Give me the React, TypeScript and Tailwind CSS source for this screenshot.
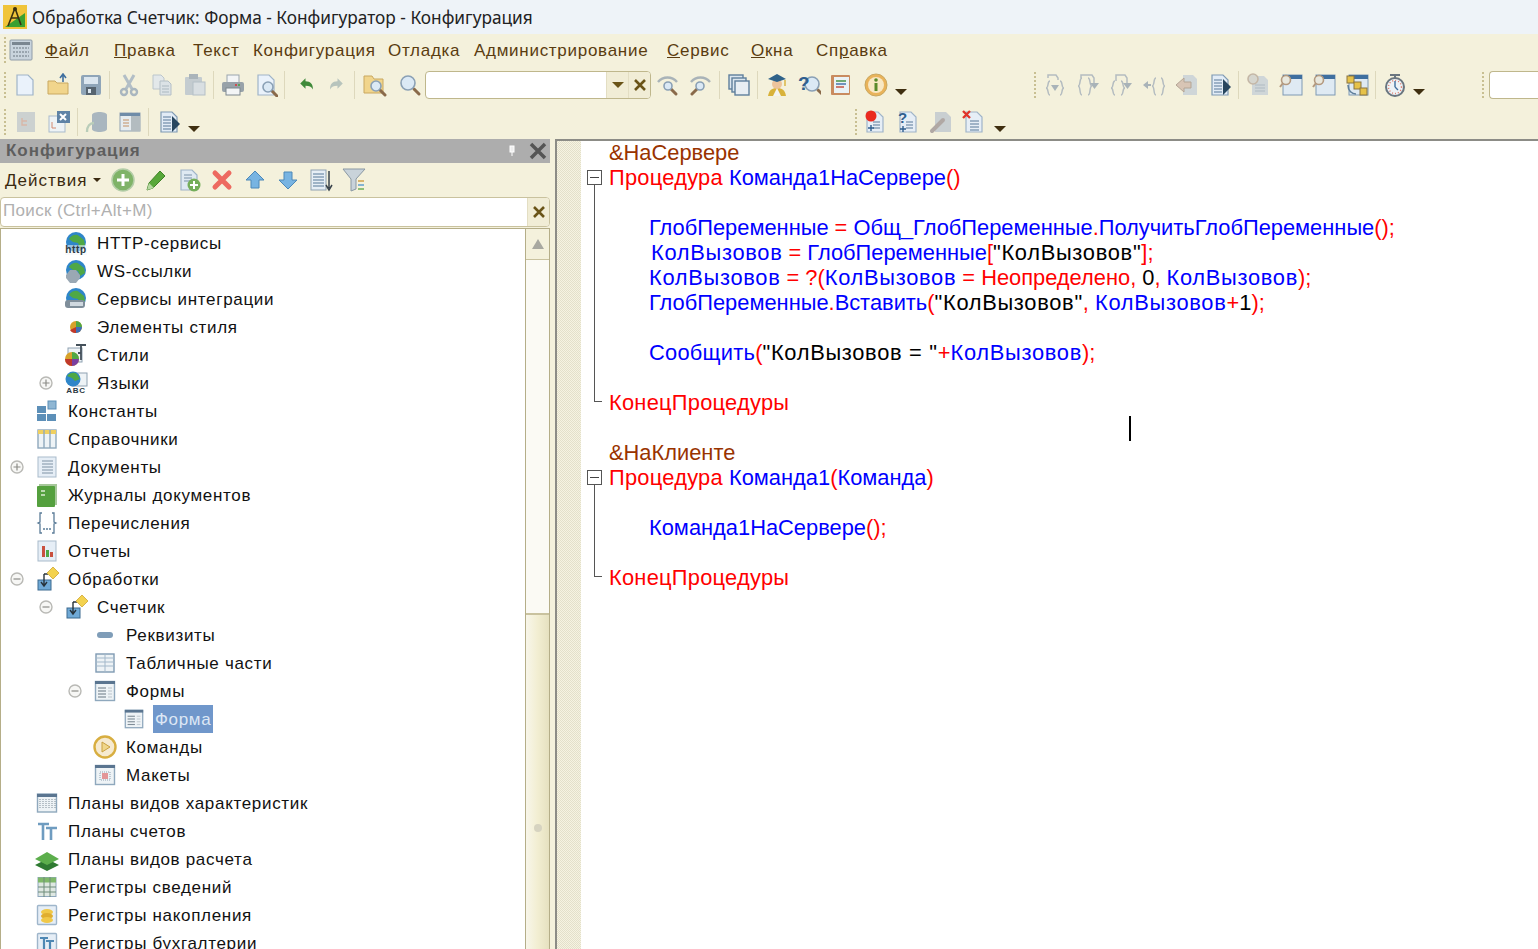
import type { ReactNode } from "react"

const sans = "font-['Liberation_Sans',Arial,sans-serif]"

// 24x24 toolbar drawings, all in the washed out 1C palette
const Svg = ({ children, size = 24 }: { children: ReactNode; size?: number }) => (
  <svg width={size} height={size} viewBox="0 0 24 24" className="shrink-0">
    {children}
  </svg>
)

const Doc = ({ fill = "#e6eef6", line = "#9fb4c8" }: { fill?: string; line?: string }) => (
  <path d="M4 2h11l5 5v15H4z" fill={fill} stroke={line} strokeWidth="1.2" />
)
const Lines = ({ x = 7, y = 8, w = 9, n = 4, c = "#8aa0b5" }: { x?: number; y?: number; w?: number; n?: number; c?: string }) => (
  <>
    {Array.from({ length: n }).map((_, i) => (
      <path key={i} d={`M${x} ${y + i * 3}h${w}`} stroke={c} strokeWidth="1.2" />
    ))}
  </>
)
const Lens = ({ x = 14, y = 14, r = 5 }: { x?: number; y?: number; r?: number }) => (
  <>
    <path d={`M${x + r - 1} ${y + r - 1}l5 5`} stroke="#8a6a4a" strokeWidth="3" strokeLinecap="round" />
    <circle cx={x} cy={y} r={r} fill="#dbe9f5" stroke="#8aa0b5" strokeWidth="1.6" />
  </>
)
const Globe = () => (
  <>
    <circle cx="12" cy="11" r="10" fill="#2f86c9" />
    <path d="M5 8c3-5 8-5 10-3l5 4 1 5-5 3-2-5-5-1z" fill="#4fa845" />
  </>
)
const Tile = ({ children }: { children?: ReactNode }) => (
  <>
    <rect x="2.5" y="2.5" width="19" height="19" rx="1" fill="#e6eef6" stroke="#9fb6cb" strokeWidth="1.4" />
    {children}
  </>
)
const Brace = ({ d }: { d: string }) => <path d={d} fill="none" stroke="#b4bcc0" strokeWidth="1.5" />
const Arrow = ({ d }: { d: string }) => <path d={d} fill="#a9b3b8" />

const icons: Record<string, ReactNode> = {
  menu: (
    <>
      <rect x="1" y="2" width="22" height="20" rx="1" fill="#c9d4dd" stroke="#8f9ca7" />
      <rect x="3" y="4" width="18" height="3" fill="#7a8690" />
      <path d="M4 10h16M4 14h16M4 18h16" stroke="#6a7680" strokeDasharray="2 1" />
    </>
  ),
  new: <Doc fill="#eaf2fb" />,
  open: (
    <>
      <path d="M2 8h7l2 2h11v11H2z" fill="#f1d58c" stroke="#c9a861" />
      <path d="M17 9V2M14 5l3-4 3 4" stroke="#3f6f9f" strokeWidth="1.6" fill="none" />
    </>
  ),
  save: (
    <>
      <rect x="2" y="2" width="20" height="20" rx="2" fill="#8fa5b8" />
      <rect x="5" y="4" width="14" height="7" fill="#dbe6ef" />
      <rect x="7" y="14" width="10" height="8" fill="#56646f" />
      <rect x="9" y="16" width="3" height="4" fill="#dbe6ef" />
    </>
  ),
  cut: (
    <>
      <path d="M7 2l8 14M17 2L9 16" stroke="#b2bec6" strokeWidth="3" />
      <circle cx="7" cy="19" r="3" fill="none" stroke="#a9b6bf" strokeWidth="2.4" />
      <circle cx="17" cy="19" r="3" fill="none" stroke="#a9b6bf" strokeWidth="2.4" />
    </>
  ),
  copy: (
    <>
      <path d="M3 2h8l3 3v11H3z" fill="#e3e8ea" stroke="#bcc6cc" />
      <path d="M10 8h8l3 3v11H10z" fill="#dbe2e6" stroke="#b4bfc6" />
      <Lines x={12} y={13} w={7} n={3} c="#b4bfc6" />
    </>
  ),
  paste: (
    <>
      <rect x="2" y="4" width="17" height="18" rx="1" fill="#c4ccd0" />
      <rect x="6" y="1" width="9" height="5" fill="#aab4ba" />
      <rect x="10" y="9" width="12" height="13" fill="#d9dfe2" stroke="#b4bfc6" />
    </>
  ),
  print: (
    <>
      <rect x="6" y="2" width="12" height="8" fill="#f3f5f6" stroke="#9aa5ad" />
      <rect x="1" y="9" width="22" height="10" rx="2" fill="#98a2a9" />
      <rect x="5" y="15" width="14" height="7" fill="#f3f5f6" stroke="#7d878e" />
      <path d="M14 12h2" stroke="#e03030" strokeWidth="1.5" />
      <path d="M17 12h2" stroke="#4aa03c" strokeWidth="1.5" />
    </>
  ),
  preview: (
    <>
      <Doc fill="#eaf2fb" />
      <Lens x={14} y={14} r={5} />
    </>
  ),
  undo: <path d="M3 10l7-7v4c7 0 10 4 10 11-2-4-5-5-10-5v4z" fill="#3f8a3a" />,
  redo: <path d="M21 10l-7-7v4C7 7 4 11 4 18c2-4 5-5 10-5v4z" fill="#b7c4bd" />,
  findFolder: (
    <>
      <path d="M1 3h8l2 3h9v14H1z" fill="#f1d58c" stroke="#c9a861" />
      <Lens x={13} y={13} r={5} />
    </>
  ),
  search: <Lens x={10} y={10} r={7} />,
  next: (
    <>
      <path d="M2 9c5-6 14-6 19 0" fill="none" stroke="#a9b3b8" strokeWidth="2.4" />
      <Lens x={12} y={13} r={4} />
    </>
  ),
  windows: (
    <>
      <rect x="2" y="2" width="14" height="14" fill="#dbe6ef" stroke="#5f7f9c" strokeWidth="1.4" />
      <rect x="5" y="5" width="14" height="14" fill="#dbe6ef" stroke="#5f7f9c" strokeWidth="1.4" />
      <rect x="8" y="8" width="14" height="14" fill="#e8eef3" stroke="#5f7f9c" strokeWidth="1.4" />
    </>
  ),
  student: (
    <>
      <path d="M3 23c1-6 4-8 9-8s8 2 9 8z" fill="#d8b23a" />
      <path d="M8 23l4-8 4 8z" fill="#f4f4f0" />
      <circle cx="12" cy="11" r="5" fill="#edc49c" />
      <path d="M3 6l9-5 9 5-9 3z" fill="#2f6289" />
      <path d="M20 7v6" stroke="#d8b23a" strokeWidth="1.4" />
    </>
  ),
  help: (
    <>
      <Lens x={15} y={11} r={7} />
      <text x="1" y="17" fontSize="19" fontWeight="700" fill="#2f5f8f" fontFamily="Liberation Sans">?</text>
    </>
  ),
  journal: (
    <>
      <rect x="2" y="2" width="19" height="20" rx="1" fill="#c98b5f" />
      <rect x="5" y="4" width="15" height="16" fill="#eaf2f5" />
      <path d="M7 8h10" stroke="#3c8c3c" strokeWidth="1.4" />
      <path d="M7 11h10" stroke="#3c6ca8" strokeWidth="1.4" />
      <path d="M7 14h8" stroke="#c04a3a" strokeWidth="1.4" />
    </>
  ),
  info: (
    <>
      <circle cx="12" cy="12" r="11" fill="#e9b35a" stroke="#c9a861" />
      <circle cx="12" cy="12" r="8" fill="#f8e8c4" />
      <rect x="10.5" y="10" width="3" height="8" fill="#5a8a2a" />
      <circle cx="12" cy="7" r="1.8" fill="#5a8a2a" />
    </>
  ),
  stepIn: (
    <>
      <Brace d="M7 8C4 8 6 15 3 15c3 0 1 7 4 7M17 8c3 0 1 7 4 7-3 0-1 7-4 7" />
      <Brace d="M5 5V2h8l2 3v2" />
      <Arrow d="M8 12h8l-4 6z" />
    </>
  ),
  stepOver: (
    <>
      <Brace d="M6 5C3 5 5 13 2 13c3 0 1 9 4 9M12 5c3 0 1 8 4 8-3 0-1 9-4 9" />
      <Brace d="M5 5V2h11l2 3v5" />
      <Arrow d="M14 10h9l-4.5 6z" />
    </>
  ),
  stepOut: (
    <>
      <Brace d="M6 8C3 8 5 15 2 15c3 0 1 7 4 7M12 8c3 0 1 7 4 7-3 0-1 7-4 7" />
      <Brace d="M7 8V2h9l2 3v5" />
      <Arrow d="M14 10h9l-4.5 6z" />
    </>
  ),
  runTo: (
    <>
      <Brace d="M14 5c-3 0-1 8-4 8 3 0 1 9 4 9M19 5c3 0 1 8 4 8-3 0-1 9-4 9" />
      <Arrow d="M1 12l5-4v3h3v2H6v3z" />
    </>
  ),
  skip: (
    <>
      <path d="M8 2h10l4 4v16H8z" fill="#cfd6d8" />
      <path d="M1 12l8-7v4h7v6H9v4z" fill="#d8c5b5" stroke="#b4a595" />
    </>
  ),
  docRun: (
    <>
      <Doc fill="#e2ecf6" line="#7f9ab3" />
      <Lines x={6} y={7} w={8} n={5} c="#6f8ca8" />
      <path d="M15 6l8 8-8 8z" fill="#27465f" />
    </>
  ),
  grayDocLens: (
    <>
      <path d="M6 3h12l4 4v15H6z" fill="#cfd6d8" />
      <Lines x={9} y={12} w={10} n={3} c="#b4bfc6" />
      <circle cx="7" cy="6" r="5" fill="#d6d6ce" stroke="#c4b7a6" strokeWidth="1.6" />
    </>
  ),
  winLens: (
    <>
      <rect x="4" y="2" width="19" height="20" fill="#dfeaf3" stroke="#7f9ab3" />
      <rect x="4" y="2" width="19" height="4" fill="#3f6f9f" />
      <circle cx="7" cy="7" r="4.5" fill="#e8e8de" stroke="#b49a80" strokeWidth="1.6" />
      <path d="M4 10l-3 4" stroke="#b49a80" strokeWidth="2" />
    </>
  ),
  chain: (
    <>
      <rect x="4" y="2" width="19" height="20" fill="#dfeaf3" stroke="#7f9ab3" />
      <rect x="4" y="2" width="19" height="4" fill="#3f6f9f" />
      <rect x="2" y="3" width="7" height="7" fill="#e6c24a" stroke="#8a7440" />
      <rect x="9" y="9" width="7" height="7" fill="#e6c24a" stroke="#8a7440" />
      <rect x="15" y="15" width="7" height="7" fill="#e6c24a" stroke="#8a7440" />
      <path d="M3 12c0 6 4 9 8 9" fill="none" stroke="#5f7f9c" strokeWidth="1.6" />
    </>
  ),
  clock: (
    <>
      <path d="M7 2h10M12 2v4" stroke="#6a7680" strokeWidth="2" />
      <circle cx="12" cy="14" r="9" fill="#eef3f6" stroke="#6a7680" strokeWidth="2" />
      <circle cx="12" cy="14" r="6.5" fill="none" stroke="#e07a6a" strokeWidth="1.4" strokeDasharray="1 2" />
      <path d="M12 14V8M12 14l3 3" stroke="#3f6f9f" strokeWidth="1.4" />
    </>
  ),
  tree: (
    <>
      <rect x="3" y="2" width="18" height="20" fill="#ccd1d0" />
      <path d="M8 8v7h5M8 11h5" stroke="#d9b7a7" strokeWidth="1.4" fill="none" />
    </>
  ),
  treeX: (
    <>
      <rect x="2" y="6" width="16" height="16" fill="#eef3f6" stroke="#a9bbcb" />
      <path d="M5 12v6h4" stroke="#d48a70" fill="none" />
      <rect x="10" y="1" width="13" height="12" fill="#5f83a6" />
      <path d="M13 4l6 6M19 4l-6 6" stroke="#fff" strokeWidth="2" />
    </>
  ),
  db: (
    <>
      <path d="M7 5c0-4 15-4 15 0v14c0 4-15 4-15 0z" fill="#a9b6bf" />
      <path d="M2 22c0-6 3-9 7-9" fill="none" stroke="#b9cdb9" strokeWidth="2.4" />
    </>
  ),
  table: (
    <>
      <rect x="2" y="3" width="20" height="18" fill="#e6ecef" stroke="#8fa2b2" />
      <rect x="2" y="3" width="20" height="3" fill="#6f8ca8" />
      <rect x="13" y="6" width="9" height="15" fill="#b3bcc0" />
      <Lines x={5} y={10} w={6} n={3} c="#c9a07a" />
    </>
  ),
  breakpoint: (
    <>
      <Doc />
      <Lines x={10} y={12} w={7} n={3} c="#6f8ca8" />
      <circle cx="8" cy="6" r="5.5" fill="#ea2a20" />
      <path d="M8 15v6M5 18h6" stroke="#2f5f8f" strokeWidth="1.4" />
    </>
  ),
  condition: (
    <>
      <Doc />
      <Lines x={10} y={12} w={7} n={3} c="#6f8ca8" />
      <text x="2" y="13" fontSize="15" fontWeight="700" fill="#2f5f8f" fontFamily="Liberation Sans">?</text>
      <path d="M7 16v6M4 19h6" stroke="#2f5f8f" strokeWidth="1.4" />
    </>
  ),
  grayPen: (
    <>
      <path d="M6 2h11l5 5v15H6z" fill="#c9cfd1" />
      <path d="M3 21L14 10" stroke="#b0a8a4" strokeWidth="4" strokeLinecap="round" />
    </>
  ),
  redDoc: (
    <>
      <Doc />
      <Lines x={8} y={11} w={9} n={4} c="#6f8ca8" />
      <path d="M1 1l7 7M8 1L1 8" stroke="#e0342a" strokeWidth="2.4" />
    </>
  ),
  plusCircle: (
    <>
      <circle cx="12" cy="12" r="11" fill="#7fb368" stroke="#b4cda8" strokeWidth="1.5" />
      <path d="M12 6v12M6 12h12" stroke="#fff" strokeWidth="3" />
    </>
  ),
  pencil: (
    <>
      <path d="M3 22l2-7L16 3l5 5L9 20z" fill="#58a83a" stroke="#3f8228" />
      <path d="M3 22l2-7 5 5z" fill="#b6d8a2" />
    </>
  ),
  docPlus: (
    <>
      <Doc fill="#dfe9f2" />
      <Lines x={7} y={7} w={8} n={3} />
      <circle cx="17" cy="17" r="6.5" fill="#74ae5a" />
      <path d="M17 13v8M13 17h8" stroke="#fff" strokeWidth="2" />
    </>
  ),
  redX: <path d="M5 5l14 14M19 5L5 19" stroke="#ed6a60" strokeWidth="5" strokeLinecap="round" />,
  up: <path d="M12 3l9 9h-5v8H8v-8H3z" fill="#78b4e2" stroke="#4d88b8" />,
  down: <path d="M12 21l-9-9h5V4h8v8h5z" fill="#78b4e2" stroke="#4d88b8" />,
  sortList: (
    <>
      <rect x="2" y="2" width="15" height="20" fill="#e6eef6" stroke="#8fa2b2" />
      <Lines x={4} y={6} w={11} n={5} c="#6f8ca8" />
      <path d="M20 3v17M17 17l3 5 3-5" stroke="#39434c" strokeWidth="1.5" fill="none" />
    </>
  ),
  filter: (
    <>
      <path d="M1 1h22l-9 10v10l-5 2V11z" fill="#c9d3da" stroke="#8a98a3" />
      <path d="M16 13h6" stroke="#d2a04a" strokeWidth="1.5" />
      <path d="M16 17h6" stroke="#5f9ecf" strokeWidth="1.5" />
      <path d="M16 21h6" stroke="#6fae56" strokeWidth="1.5" />
    </>
  ),
  http: (
    <>
      <Globe />
      <rect x="1" y="14" width="22" height="10" fill="#f4f6f7" fillOpacity="0.55" />
      <text x="12" y="22" fontSize="10" fontWeight="700" textAnchor="middle" fill="#2c3a44" fontFamily="Liberation Sans">http</text>
    </>
  ),
  ws: (
    <>
      <Globe />
      <path d="M6 11h6l4 5v3l-4 5H6l-4-5v-3z" fill="#9aa8b4" />
    </>
  ),
  integration: (
    <>
      <Globe />
      <rect x="1" y="13" width="20" height="8" rx="3" fill="#7f8e9a" />
      <rect x="6" y="15" width="13" height="4" fill="#cfd8df" />
    </>
  ),
  styleEl: (
    <>
      <circle cx="12" cy="12" r="6" fill="#d8a22a" />
      <path d="M12 12V6a6 6 0 0 1 6 6z" fill="#4fa845" />
      <path d="M12 12h6a6 6 0 0 1-6 6z" fill="#3f6fb8" />
      <path d="M12 12v6a6 6 0 0 1-6-3z" fill="#c0392b" />
    </>
  ),
  styles: (
    <>
      <rect x="4" y="5" width="14" height="14" fill="#eef3f6" stroke="#8fa2b2" />
      <path d="M12 2h10M17 2v15M14 10h3" stroke="#45515b" strokeWidth="1.8" fill="none" />
      <circle cx="8" cy="16" r="7" fill="#d8a22a" />
      <path d="M8 16V9a7 7 0 0 1 7 7z" fill="#4fa845" />
      <path d="M8 16h-7a7 7 0 0 0 7 7z" fill="#c0392b" />
      <path d="M8 16h7a7 7 0 0 1-7 7z" fill="#7a3fa0" />
    </>
  ),
  langs: (
    <>
      <rect x="8" y="2" width="15" height="13" fill="#eef3f6" stroke="#8fa2b2" />
      <circle cx="9" cy="8" r="7.5" fill="#2f86c9" />
      <path d="M3 5c3-4 8-4 10-2l3 5-5 2-3-3z" fill="#4fa845" />
      <text x="12" y="22" fontSize="8" fontWeight="700" textAnchor="middle" fill="#2c3a44" fontFamily="Liberation Sans">ABC</text>
    </>
  ),
  constants: (
    <>
      <rect x="2" y="7" width="9" height="7" fill="#5c8fb8" />
      <rect x="2" y="15" width="9" height="7" fill="#5c8fb8" />
      <rect x="12" y="15" width="9" height="7" fill="#5c8fb8" />
      <rect x="13" y="2" width="8" height="8" fill="#8fb6d3" stroke="#5c8fb8" />
    </>
  ),
  catalogs: (
    <>
      <rect x="3" y="3" width="18" height="18" fill="#eef3f6" stroke="#8fa8bd" strokeWidth="1.4" />
      <rect x="3" y="3" width="18" height="4" fill="#f0d060" />
      <path d="M9 3v18M15 3v18" stroke="#8fa8bd" strokeWidth="1.4" />
    </>
  ),
  documents: (
    <>
      <rect x="3" y="2" width="18" height="20" fill="#e6eef6" stroke="#a9bbcb" />
      <Lines x={7} y={6} w={11} n={5} c="#8fa2b2" />
    </>
  ),
  journals: (
    <>
      <rect x="4" y="1" width="18" height="21" fill="#a6c79a" />
      <rect x="2" y="3" width="18" height="21" rx="1" fill="#54a03e" />
      <path d="M6 8h4M6 12h4" stroke="#dcebd4" strokeWidth="1.5" />
    </>
  ),
  enums: (
    <>
      <path d="M7 2H5v9l-2 1 2 1v9h2M17 2h2v9l2 1-2 1v9h-2" fill="none" stroke="#5b7c98" strokeWidth="1.3" />
      <path d="M8 18h2M11 18h2M14 18h2" stroke="#5b7c98" strokeWidth="1.5" />
    </>
  ),
  reports: (
    <>
      <rect x="3" y="2" width="18" height="20" fill="#e6eef6" stroke="#a9bbcb" />
      <rect x="7" y="7" width="3" height="11" fill="#c9503f" />
      <rect x="11" y="11" width="3" height="7" fill="#4fa845" />
      <rect x="15" y="13" width="3" height="5" fill="#c9503f" />
    </>
  ),
  processing: (
    <>
      <rect x="3" y="13" width="13" height="10" fill="#6fa9d6" stroke="#3d6a8f" />
      <path d="M9 7v11M6 15l3 4 3-4M9 7h5" stroke="#27323a" strokeWidth="1.4" fill="none" />
      <path d="M18 0l6 6-6 6-6-6z" fill="#f3d24f" stroke="#d8b44a" />
    </>
  ),
  attr: <rect x="4" y="9" width="16" height="6" rx="3" fill="#7f9db8" />,
  tableParts: (
    <>
      <rect x="3" y="3" width="18" height="18" fill="#eef3f6" stroke="#7f9ab3" strokeWidth="1.4" />
      <path d="M3 7h18M12 3v18M3 11h18M3 15h18" stroke="#a3b8ca" />
    </>
  ),
  forms: (
    <>
      <rect x="2.5" y="2.5" width="19" height="19" fill="#eef3f6" stroke="#8fa8bd" strokeWidth="1.4" />
      <rect x="2" y="2" width="20" height="3" fill="#5a7590" />
      <Lines x={5} y={9} w={8} n={4} c="#7f8c97" />
      <Lines x={15} y={9} w={4} n={4} c="#c3ccd3" />
    </>
  ),
  commands: (
    <>
      <circle cx="12" cy="12" r="10.5" fill="#f6ead0" stroke="#d8ae40" strokeWidth="2.4" />
      <path d="M9 7l8 5-8 5z" fill="#f0d68a" stroke="#c9a040" />
    </>
  ),
  templates: (
    <>
      <rect x="2.5" y="2.5" width="19" height="19" fill="#eef3f6" stroke="#8fa8bd" strokeWidth="1.4" />
      <rect x="2" y="2" width="20" height="3" fill="#5a7590" />
      <rect x="7" y="9" width="10" height="8" fill="none" stroke="#8fa2b2" strokeDasharray="1 1" />
      <path d="M9 11h6M9 13h6M9 15h6" stroke="#d83a3a" />
    </>
  ),
  charts: (
    <>
      <rect x="2.5" y="3" width="19" height="18" fill="#eef3f6" stroke="#8fa8bd" strokeWidth="1.4" />
      <rect x="2" y="3" width="20" height="3" fill="#5a7590" />
      <path d="M5 8v10M8 8v10M11 8v10M14 8v10M17 8v10M20 8v10" stroke="#7f8c97" strokeDasharray="1 1" />
    </>
  ),
  accounts: <path d="M3 5h11M8 5v16M11 9h11M16 9v12" stroke="#6f9cc0" strokeWidth="2.6" fill="none" />,
  calc: (
    <>
      <path d="M12 12l12 6-12 6L0 18z" fill="#2f7a32" />
      <path d="M12 5l12 7-12 6L0 12z" fill="#5cae4c" />
    </>
  ),
  infoReg: (
    <>
      <rect x="3" y="2.5" width="18" height="19" fill="#dfe8e2" stroke="#8fa8bd" />
      <rect x="3" y="2.5" width="18" height="5" fill="#7fb86a" />
      <path d="M9 2v20M15 2v20M3 12h18M3 17h18" stroke="#6f8c7a" />
    </>
  ),
  accum: (
    <>
      <Tile />
      <ellipse cx="12" cy="9" rx="6" ry="3" fill="#f0c848" />
      <ellipse cx="12" cy="13" rx="6" ry="3" fill="#e0ae30" />
      <ellipse cx="12" cy="17" rx="6" ry="3" fill="#f0c848" />
    </>
  ),
  acct: (
    <Tile>
      <path d="M5 7h8M9 7v11M11 10h8M15 10v8" stroke="#4f88b4" strokeWidth="2.2" fill="none" />
    </Tile>
  ),
}

const Icon = ({ name, size = 24 }: { name: string; size?: number }) => <Svg size={size}>{icons[name]}</Svg>

const Grip = () => <div className="h-[26px] w-[2px] shrink-0 border-l-2 border-dotted border-[#c8bf92]" />
const Sep = () => <div className="mx-[2px] h-[28px] w-px shrink-0 bg-[#ddd8bc]" />
const Caret = () => <div className="mt-[14px] h-0 w-0 shrink-0 border-x-[6px] border-t-[6px] border-x-transparent border-t-[#3f2f10]" />

const Tool = ({ name, size = 24 }: { name: string; size?: number }) => (
  <div className="flex w-[33px] shrink-0 items-center justify-center">
    <Icon name={name} size={size} />
  </div>
)

const CloseX = () => (
  <svg width="14" height="14" viewBox="0 0 14 14">
    <path d="M2 2l10 10M12 2L2 12" stroke="#6a5418" strokeWidth="2.6" />
  </svg>
)

const menuItems: { label: ReactNode; cls: string }[] = [
  { label: <><u>Ф</u>айл</>, cls: "w-[69px]" },
  { label: <><u>П</u>равка</>, cls: "w-[79px]" },
  { label: "Текст", cls: "w-[60px]" },
  { label: "Конфигурация", cls: "w-[135px]" },
  { label: "Отладка", cls: "w-[86px]" },
  { label: "Администрирование", cls: "w-[193px]" },
  { label: <><u>С</u>ервис</>, cls: "w-[84px]" },
  { label: <><u>О</u>кна</>, cls: "w-[65px]" },
  { label: <>Сп<u>р</u>авка</>, cls: "w-[80px]" },
]

type Row = { label: string; icon: string; level: number; exp?: "+" | "-"; selected?: boolean }

const tree: Row[] = [
  { label: "HTTP-сервисы", icon: "http", level: 1 },
  { label: "WS-ссылки", icon: "ws", level: 1 },
  { label: "Сервисы интеграции", icon: "integration", level: 1 },
  { label: "Элементы стиля", icon: "styleEl", level: 1 },
  { label: "Стили", icon: "styles", level: 1 },
  { label: "Языки", icon: "langs", level: 1, exp: "+" },
  { label: "Константы", icon: "constants", level: 0 },
  { label: "Справочники", icon: "catalogs", level: 0 },
  { label: "Документы", icon: "documents", level: 0, exp: "+" },
  { label: "Журналы документов", icon: "journals", level: 0 },
  { label: "Перечисления", icon: "enums", level: 0 },
  { label: "Отчеты", icon: "reports", level: 0 },
  { label: "Обработки", icon: "processing", level: 0, exp: "-" },
  { label: "Счетчик", icon: "processing", level: 1, exp: "-" },
  { label: "Реквизиты", icon: "attr", level: 2 },
  { label: "Табличные части", icon: "tableParts", level: 2 },
  { label: "Формы", icon: "forms", level: 2, exp: "-" },
  { label: "Форма", icon: "forms", level: 3, selected: true },
  { label: "Команды", icon: "commands", level: 2 },
  { label: "Макеты", icon: "templates", level: 2 },
  { label: "Планы видов характеристик", icon: "charts", level: 0 },
  { label: "Планы счетов", icon: "accounts", level: 0 },
  { label: "Планы видов расчета", icon: "calc", level: 0 },
  { label: "Регистры сведений", icon: "infoReg", level: 0 },
  { label: "Регистры накопления", icon: "accum", level: 0 },
  { label: "Регистры бухгалтерии", icon: "acct", level: 0 },
]

const indent = ["pl-[6px]", "pl-[35px]", "pl-[64px]", "pl-[93px]"]

const Expander = ({ kind }: { kind?: "+" | "-" }) => (
  <div className="flex w-[20px] shrink-0 items-center justify-center">
    {kind && (
      <svg width="14" height="14" viewBox="0 0 14 14">
        <circle cx="7" cy="7" r="6" fill="#f7f7f5" stroke="#b9b9b5" strokeWidth="1.4" />
        <path d={kind === "+" ? "M3.5 7h7M7 3.5v7" : "M3.5 7h7"} stroke="#8c8c88" strokeWidth="1.2" />
      </svg>
    )}
  </div>
)

const TreeRow = ({ row }: { row: Row }) => (
  <div className={`flex h-[28px] shrink-0 items-center ${indent[row.level]}`}>
    <Expander kind={row.exp} />
    <div className="ml-[8px] flex w-[24px] shrink-0 justify-center">
      <Icon name={row.icon} size={row.selected ? 22 : 24} />
    </div>
    <span
      className={
        row.selected
          ? "ml-[7px] flex h-[28px] items-center bg-[#7097cb] px-[2px] pt-[2px] text-[#dde7f5]"
          : "ml-[9px] pt-[2px] text-[#111]"
      }
    >
      {row.label}
    </span>
  </div>
)

// code colours: a annotation, k keyword/operator, b identifier, s string
type Tok = [string, "a" | "k" | "b" | "s"]
const tokCls = { a: "text-[#993300]", k: "text-[#ff0000]", b: "text-[#0000ff]", s: "text-black" }

// these words come out wider in the reference than the font gives
const tokTrack = (t: string) => {
  if (t.includes("КолВызовов")) return "tracking-[0.7px]"
  if (t.includes("Процедур") || t === "Сообщить") return "tracking-[0.25px]"
  return ""
}

type Line = { toks?: Tok[]; pad?: string; fold?: "box" | "line" | "end"; caret?: boolean }

const code: Line[] = [
  { toks: [["&НаСервере", "a"]] },
  { toks: [["Процедура", "k"], [" ", "s"], ["Команда1НаСервере", "b"], ["()", "k"]], fold: "box" },
  { fold: "line" },
  {
    pad: "pl-[40px]",
    fold: "line",
    toks: [["ГлобПеременные", "b"], [" = ", "k"], ["Общ_ГлобПеременные", "b"], [".", "k"], ["ПолучитьГлобПеременные", "b"], ["();", "k"]],
  },
  {
    pad: "pl-[42px]",
    fold: "line",
    toks: [["КолВызовов", "b"], [" = ", "k"], ["ГлобПеременные", "b"], ["[", "k"], ['"КолВызовов"', "s"], ["];", "k"]],
  },
  {
    pad: "pl-[40px]",
    fold: "line",
    toks: [["КолВызовов", "b"], [" = ?(", "k"], ["КолВызовов", "b"], [" = ", "k"], ["Неопределено", "k"], [", ", "k"], ["0", "s"], [", ", "k"], ["КолВызовов", "b"], [");", "k"]],
  },
  {
    pad: "pl-[40px]",
    fold: "line",
    toks: [["ГлобПеременные", "b"], [".", "k"], ["Вставить", "b"], ["(", "k"], ['"КолВызовов"', "s"], [", ", "k"], ["КолВызовов", "b"], ["+", "k"], ["1", "s"], [");", "k"]],
  },
  { fold: "line" },
  {
    pad: "pl-[40px]",
    fold: "line",
    toks: [["Сообщить", "b"], ["(", "k"], ['"КолВызовов = "', "s"], ["+", "k"], ["КолВызовов", "b"], [");", "k"]],
  },
  { fold: "line" },
  { fold: "end", toks: [["КонецПроцедуры", "k"]] },
  { caret: true },
  { toks: [["&НаКлиенте", "a"]] },
  { toks: [["Процедура", "k"], [" ", "s"], ["Команда1", "b"], ["(", "k"], ["Команда", "b"], [")", "k"]], fold: "box" },
  { fold: "line" },
  { pad: "pl-[40px]", fold: "line", toks: [["Команда1НаСервере", "b"], ["();", "k"]] },
  { fold: "line" },
  { fold: "end", toks: [["КонецПроцедуры", "k"]] },
]

const Fold = ({ kind }: { kind?: Line["fold"] }) => (
  <div className="relative h-full w-[28px] shrink-0">
    {kind === "box" && (
      <>
        <div className="absolute left-[6px] top-[5px] flex h-[15px] w-[15px] items-center justify-center border border-[#555] bg-white">
          <div className="h-px w-[9px] bg-[#444]" />
        </div>
        <div className="absolute bottom-0 left-[13px] top-[20px] w-px bg-[#555]" />
      </>
    )}
    {kind === "line" && <div className="absolute inset-y-0 left-[13px] w-px bg-[#555]" />}
    {kind === "end" && (
      <div className="absolute left-[13px] top-0 h-[12px] w-[8px] border-b border-l border-[#555]" />
    )}
  </div>
)

export default function App() {
  return (
    <div className={`flex h-[949px] w-[1538px] flex-col overflow-hidden bg-[#f4f1dc] ${sans}`}>
      {/* Title bar */}
      <div className="flex h-[34px] shrink-0 items-center bg-[#eef3f8] pl-[3px] font-['Noto_Sans',sans-serif] text-[17.25px] text-[#222]">
        <svg width="24" height="24" viewBox="0 0 24 24" className="shrink-0">
          <rect width="24" height="24" fill="#f0c43a" />
          <path d="M2 22L22 8v14z" fill="#3aa030" />
          <path d="M12 3L5 21M12 3l6 17M8 13h8" stroke="#3a3010" strokeWidth="1.6" fill="none" />
          <circle cx="12" cy="4" r="2" fill="#3a3010" />
        </svg>
        <span className="ml-[5px] pt-[2px]">Обработка Счетчик: Форма - Конфигуратор - Конфигурация</span>
      </div>

      {/* Menu */}
      <div className="flex h-[32px] shrink-0 items-center pl-[4px] text-[17px] tracking-[0.72px] text-[#5a3c10]">
        <Grip />
        <div className="ml-[3px] w-[36px] shrink-0">
          <Icon name="menu" />
        </div>
        {menuItems.map((m, i) => (
          <span key={i} className={`${m.cls} shrink-0 whitespace-nowrap pt-[2px]`}>
            {m.label}
          </span>
        ))}
      </div>

      {/* Toolbar 1 */}
      <div className="flex h-[38px] shrink-0 items-center pl-[4px]">
        <Grip />
        <div className="w-[2px] shrink-0" />
        {["new", "open", "save"].map((n) => <Tool key={n} name={n} />)}
        <Sep />
        {["cut", "copy", "paste"].map((n) => <Tool key={n} name={n} />)}
        <Sep />
        {["print", "preview"].map((n) => <Tool key={n} name={n} />)}
        <Sep />
        <div className="ml-[3px]"><Tool name="undo" size={18} /></div>
        <div className="-ml-[4px]"><Tool name="redo" size={18} /></div>
        <Sep />
        <div className="ml-[1px]"><Tool name="findFolder" /></div>
        <div className="ml-[2px]"><Tool name="search" /></div>
        <div className="-ml-[1px] flex h-[28px] w-[226px] shrink-0 overflow-hidden rounded-[4px] border border-[#bfb78c] bg-white">
          <div className="flex-1" />
          <div className="flex w-[22px] items-center justify-center border-l border-[#e3dec3] bg-[#f1edd6]">
            <div className="h-0 w-0 border-x-[6px] border-t-[6px] border-x-transparent border-t-[#6a5418]" />
          </div>
          <div className="flex w-[22px] items-center justify-center border-l border-[#e3dec3] bg-[#f1edd6]">
            <CloseX />
          </div>
        </div>
        <Tool name="next" />
        <div className="-scale-x-100"><Tool name="next" /></div>
        <Sep />
        <Tool name="windows" />
        <Sep />
        <Tool name="student" />
        <div className="-ml-[1px]"><Tool name="help" /></div>
        <div className="-ml-[1px]"><Tool name="journal" /></div>
        <div className="ml-[2px]"><Tool name="info" /></div>
        <div className="ml-[3px]"><Caret /></div>

        <div className="ml-[127px]"><Grip /></div>
        <div className="w-[2px] shrink-0" />
        {["stepIn", "stepOver", "stepOut", "runTo", "skip", "docRun"].map((n) => <Tool key={n} name={n} />)}
        <Sep />
        {["grayDocLens", "winLens", "winLens", "chain"].map((n) => <Tool key={n} name={n} />)}
        <Sep />
        <Tool name="clock" />
        <div className="ml-[2px]"><Caret /></div>
        <div className="ml-[57px]"><Grip /></div>
        <div className="ml-[5px] h-[28px] flex-1 rounded-l-[4px] border border-r-0 border-[#bfb78c] bg-white" />
      </div>

      {/* Toolbar 2 */}
      <div className="flex h-[35px] shrink-0 items-center pl-[4px]">
        <Grip />
        <div className="w-[3px] shrink-0" />
        <Tool name="tree" />
        <Tool name="treeX" />
        <Sep />
        <Tool name="db" />
        <Tool name="table" />
        <Sep />
        <div className="ml-[1px]"><Tool name="docRun" /></div>
        <div className="ml-[3px]"><Caret /></div>
        <div className="ml-[655px]"><Grip /></div>
        <div className="w-[1px] shrink-0" />
        {["breakpoint", "condition", "grayPen", "redDoc"].map((n) => <Tool key={n} name={n} />)}
        <div className="ml-[4px]"><Caret /></div>
      </div>

      {/* Body */}
      <div className="flex min-h-0 flex-1">
        {/* Configuration panel */}
        <div className="flex h-full w-[550px] shrink-0 flex-col">
          <div className="flex h-[24px] shrink-0 items-center bg-[#adadad] pl-[6px] pr-[3px]">
            <span className="flex-1 text-[17px] font-bold tracking-[0.95px] text-[#5e5e5e]">Конфигурация</span>
            <svg width="10" height="12" viewBox="0 0 10 12" className="mr-[12px]">
              <rect x="3" y="1" width="4" height="6" fill="#eee" stroke="#fff" />
              <path d="M5 7v4" stroke="#fff" />
            </svg>
            <svg width="18" height="18" viewBox="0 0 18 18">
              <path d="M2 2l14 14M16 2L2 16" stroke="#555" strokeWidth="3.5" />
            </svg>
          </div>
          <div className="flex h-[34px] shrink-0 items-center pl-[5px] text-[17px] tracking-[1px] text-[#3a2a10]">
            <span className="w-[88px] shrink-0 pt-[2px]">Действия</span>
            <div className="mr-[5px] h-0 w-0 border-x-[4px] border-t-[4px] border-x-transparent border-t-[#3a2a10]" />
            {["plusCircle", "pencil", "docPlus", "redX", "up", "down", "sortList", "filter"].map((n) => (
              <div key={n} className="flex w-[33px] shrink-0 justify-center">
                <Icon name={n} />
              </div>
            ))}
          </div>
          <div className="flex h-[30px] shrink-0 overflow-hidden rounded-[4px] border border-[#c9c29e] bg-white">
            <span className="flex flex-1 items-center pb-[2px] pl-[2px] text-[17px] tracking-[0.35px] text-[#b0b0b0]">Поиск (Ctrl+Alt+M)</span>
            <div className="flex w-[22px] items-center justify-center border-l border-[#e3dec3] bg-[#f1edd6]">
              <CloseX />
            </div>
          </div>
          <div className="mt-[1px] flex min-h-0 flex-1 border-x border-t border-[#b5ae88] bg-white">
            <div className="flex min-w-0 flex-1 flex-col overflow-hidden text-[17px] tracking-[0.68px]">
              {tree.map((row) => <TreeRow key={`${row.level}-${row.label}`} row={row} />)}
            </div>
            {/* Scrollbar */}
            <div className="flex w-[24px] shrink-0 flex-col border-l border-[#b5ae88]">
              <div className="flex h-[31px] shrink-0 items-center justify-center border-b border-[#c9c29e] bg-[#f4f1dc]">
                <div className="h-0 w-0 border-x-[6px] border-b-[10px] border-x-transparent border-b-[#a8a8a0]" />
              </div>
              <div className="h-[355px] shrink-0 border-b-2 border-[#c9c29e] bg-[#fbfaf4]" />
              <div className="flex flex-1 justify-center bg-gradient-to-r from-[#f8f6ea] via-[#f2eed2] to-[#e6e1c0] pt-[209px]">
                <div className="h-[8px] w-[8px] rounded-full bg-[#d6d3c0]" />
              </div>
            </div>
          </div>
        </div>

        {/* Module editor */}
        <div className="ml-[5px] flex min-w-0 flex-1 border-l-2 border-t-2 border-[#8c8c86] bg-white">
          <div className="w-[24px] shrink-0 bg-[repeating-conic-gradient(#f6f3e2_0_25%,#e3e0ca_0_50%)] bg-[length:2px_2px]" />
          <div className="-mt-[1px] flex min-w-0 flex-1 flex-col text-[21.85px] leading-[25px]">
            {code.map((line, i) => (
              <div key={i} className="relative flex h-[25px] shrink-0 items-center whitespace-pre">
                <Fold kind={line.fold} />
                <div className={line.pad ?? ""}>
                  {line.toks?.map(([t, k], j) => (
                    <span key={j} className={`${tokCls[k]} ${tokTrack(t)}`}>{t}</span>
                  ))}
                </div>
                {line.caret && <div className="absolute left-[548px] top-[1px] h-[25px] w-[2px] bg-black" />}
              </div>
            ))}
          </div>
        </div>
      </div>
    </div>
  )
}
